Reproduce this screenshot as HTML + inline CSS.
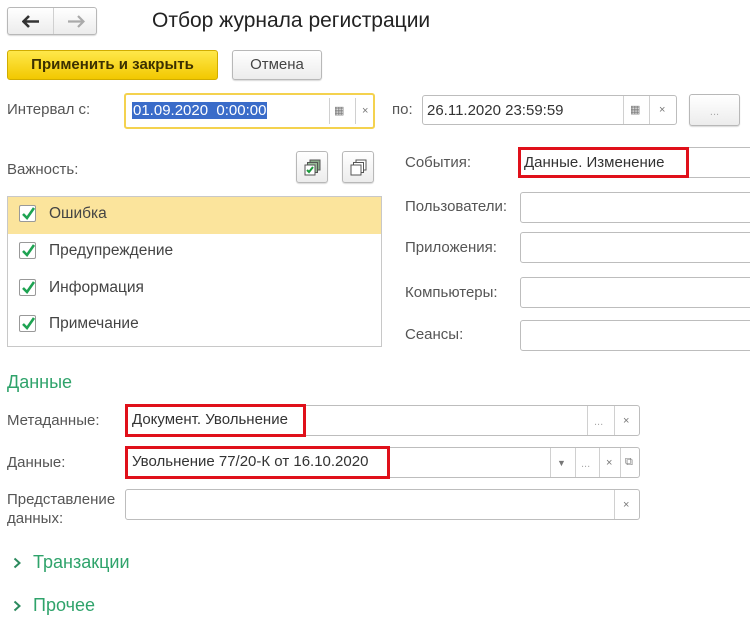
<!DOCTYPE html>
<html><head><meta charset="utf-8"><style>
*{box-sizing:border-box;margin:0;padding:0}
body{width:750px;height:635px;background:#fff;position:relative;overflow:hidden;font-family:"Liberation Sans",Arial,sans-serif;font-size:15px;color:#404040}
.a{position:absolute}
.lbl{position:absolute;color:#555;font-size:15px;line-height:16px}
.inp{position:absolute;border:1px solid #bdbdbd;border-radius:3px;background:#fff}
.btn{position:absolute;border:1px solid #b8b8b8;border-radius:3px;background:linear-gradient(#fff,#ececec);box-shadow:0 1px 1px rgba(0,0,0,.15)}
.sep{position:absolute;top:0;bottom:0;border-left:1px solid #d0d0d0}
.ic{position:absolute;color:#777;font-size:11px;line-height:12px}
.red{position:absolute;border:3px solid #e0101a}
.chk{position:absolute;left:19px;width:17px;height:17px;border:1px solid #999;border-radius:2px;background:#fff}
.chk svg{position:absolute;left:1px;top:0}
.row{position:absolute;left:49px;font-size:15.5px;color:#444}
.green{color:#2fa36b}
</style></head><body>
<div class="btn" style="left:7px;top:7px;width:90px;height:28px"><div class="sep" style="left:45px"></div>
<svg class="a" style="left:14px;top:7px" width="18" height="13"><path d="M1 6.5h16M7 1L1.5 6.5 7 12" stroke="#333" stroke-width="2.6" fill="none"/></svg>
<svg class="a" style="left:59px;top:7px" width="18" height="13"><path d="M1 6.5h16M11 1l5.5 5.5L11 12" stroke="#aaa" stroke-width="2.2" fill="none"/></svg></div>
<div class="a" style="left:152px;top:9px;font-size:21px;color:#222">Отбор журнала регистрации</div>
<div class="a" style="left:7px;top:50px;width:211px;height:30px;background:linear-gradient(#ffe84a,#f2c800);border:1px solid #d1ad00;border-radius:3px;font-weight:bold;font-size:15px;color:#3b3000;text-align:center;line-height:28px">Применить и закрыть</div>
<div class="btn" style="left:232px;top:50px;width:90px;height:30px;text-align:center;line-height:28px;color:#444">Отмена</div>

<div class="lbl" style="left:7px;top:102px">Интервал с:</div>
<div class="inp" style="left:124px;top:93px;width:251px;height:36px;border:2px solid #f4d24f">
<span class="a" style="left:6px;top:7px;background:#3a6cc9;color:#fff;font-size:15px;line-height:17px;padding:0 1px">01.09.2020&nbsp; 0:00:00</span>
<div class="sep" style="left:203px;top:3px;bottom:3px"></div><span class="ic" style="left:208px;top:10px">▦</span>
<div class="sep" style="left:229px;top:3px;bottom:3px"></div><span class="ic" style="left:236px;top:10px">×</span></div>
<div class="lbl" style="left:392px;top:102px">по:</div>
<div class="inp" style="left:422px;top:95px;width:255px;height:30px"><span class="a" style="left:4px;top:6px;color:#333">26.11.2020 23:59:59</span>
<div class="sep" style="left:200px"></div><span class="ic" style="left:207px;top:8px">▦</span>
<div class="sep" style="left:226px"></div><span class="ic" style="left:236px;top:8px">×</span></div>
<div class="btn" style="left:689px;top:94px;width:51px;height:32px;text-align:center;color:#aaa;font-size:11px;line-height:34px">...</div>

<div class="lbl" style="left:7px;top:162px">Важность:</div>
<div class="btn" style="left:296px;top:151px;width:32px;height:32px"><svg class="a" style="left:7px;top:7px" width="18" height="18"><rect x="6" y="1" width="10" height="10" fill="#8a8" stroke="#555"/><rect x="3.5" y="3.5" width="10" height="10" fill="#9b9" stroke="#555"/><rect x="1" y="6" width="10" height="10" fill="#fff" stroke="#555"/><path d="M3 11l2 2 4-5" stroke="#1a9a3a" stroke-width="2" fill="none"/></svg></div>
<div class="btn" style="left:342px;top:151px;width:32px;height:32px"><svg class="a" style="left:7px;top:7px" width="18" height="18"><rect x="6" y="1" width="10" height="10" fill="#fff" stroke="#555"/><rect x="3.5" y="3.5" width="10" height="10" fill="#fff" stroke="#555"/><rect x="1" y="6" width="10" height="10" fill="#fff" stroke="#555"/></svg></div>

<div class="a" style="left:7px;top:196px;width:375px;height:151px;border:1px solid #c8c8c8">
<div class="a" style="left:0;top:0;width:373px;height:37px;background:#fbe49c"></div></div>
<div class="chk" style="top:205px"><svg width="15" height="15"><path d="M2 8l4 4 7-10" stroke="#1ea352" stroke-width="2.6" fill="none"/></svg></div><div class="row" style="top:205px">Ошибка</div>
<div class="chk" style="top:242px"><svg width="15" height="15"><path d="M2 8l4 4 7-10" stroke="#1ea352" stroke-width="2.6" fill="none"/></svg></div><div class="row" style="top:242px">Предупреждение</div>
<div class="chk" style="top:279px"><svg width="15" height="15"><path d="M2 8l4 4 7-10" stroke="#1ea352" stroke-width="2.6" fill="none"/></svg></div><div class="row" style="top:279px">Информация</div>
<div class="chk" style="top:315px"><svg width="15" height="15"><path d="M2 8l4 4 7-10" stroke="#1ea352" stroke-width="2.6" fill="none"/></svg></div><div class="row" style="top:315px">Примечание</div>

<div class="lbl" style="left:405px;top:155px">События:</div>
<div class="inp" style="left:520px;top:147px;width:240px;height:31px"></div>
<div class="red" style="left:518px;top:147px;width:171px;height:31px"></div>
<div class="a" style="left:524px;top:154px;color:#333">Данные. Изменение</div>
<div class="lbl" style="left:405px;top:199px">Пользователи:</div>
<div class="inp" style="left:520px;top:192px;width:240px;height:31px"></div>
<div class="lbl" style="left:405px;top:240px">Приложения:</div>
<div class="inp" style="left:520px;top:232px;width:240px;height:31px"></div>
<div class="lbl" style="left:405px;top:285px">Компьютеры:</div>
<div class="inp" style="left:520px;top:277px;width:240px;height:31px"></div>
<div class="lbl" style="left:405px;top:327px">Сеансы:</div>
<div class="inp" style="left:520px;top:320px;width:240px;height:31px"></div>

<div class="a green" style="left:7px;top:372px;font-size:18px">Данные</div>
<div class="lbl" style="left:7px;top:413px">Метаданные:</div>
<div class="inp" style="left:125px;top:405px;width:515px;height:31px"><div class="sep" style="left:461px"></div><span class="ic" style="left:468px;top:10px;color:#aaa">...</span><div class="sep" style="left:488px"></div><span class="ic" style="left:497px;top:9px">×</span></div>
<div class="red" style="left:125px;top:404px;width:181px;height:33px"></div>
<div class="a" style="left:132px;top:411px;color:#333">Документ. Увольнение</div>
<div class="lbl" style="left:7px;top:455px">Данные:</div>
<div class="inp" style="left:125px;top:447px;width:515px;height:31px"><div class="sep" style="left:424px"></div><span class="ic" style="left:431px;top:9px;font-size:9px">▼</span><div class="sep" style="left:449px"></div><span class="ic" style="left:455px;top:10px;color:#aaa">...</span><div class="sep" style="left:473px"></div><span class="ic" style="left:480px;top:9px">×</span><div class="sep" style="left:494px"></div><span class="ic" style="left:499px;top:8px">⧉</span></div>
<div class="red" style="left:125px;top:446px;width:265px;height:33px"></div>
<div class="a" style="left:132px;top:453px;color:#333">Увольнение 77/20-К от 16.10.2020</div>
<div class="lbl" style="left:7px;top:490px;line-height:19px">Представление<br>данных:</div>
<div class="inp" style="left:125px;top:489px;width:515px;height:31px"><div class="sep" style="left:488px"></div><span class="ic" style="left:497px;top:9px">×</span></div>

<svg class="a" style="left:13px;top:557px" width="8" height="12"><path d="M1.5 1.5l5 4.5-5 4.5" stroke="#2c8a5e" stroke-width="2" fill="none"/></svg>
<div class="a green" style="left:33px;top:552px;font-size:18px">Транзакции</div>
<svg class="a" style="left:13px;top:600px" width="8" height="12"><path d="M1.5 1.5l5 4.5-5 4.5" stroke="#2c8a5e" stroke-width="2" fill="none"/></svg>
<div class="a green" style="left:33px;top:595px;font-size:18px">Прочее</div>
</body></html>
